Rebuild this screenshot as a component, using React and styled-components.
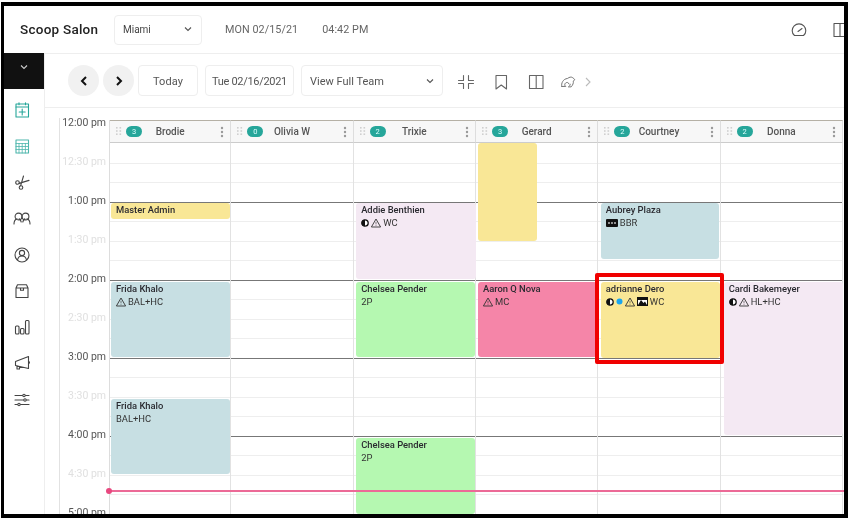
import styled, { createGlobalStyle } from "styled-components";

const GlobalStyle = createGlobalStyle`
  html, body {
    margin: 0;
    background: #fff;
    font-family: Roboto, "Liberation Sans", sans-serif;
  }
`;

const Frame = styled.div`
  box-sizing: border-box;
  width: 847px;
  height: 516px;
  margin: 2px 1px 3px;
  border: solid #000;
  border-width: 4px 4px 4px 3px;
  background: #fff;
  display: flex;
  flex-direction: column;
  overflow: hidden;
  filter: blur(0.35px);
`;

const Header = styled.header`
  flex: none;
  height: 47px;
  display: flex;
  align-items: center;
  padding-left: 16px;
  border-bottom: 1px solid #eee;
`;

const Brand = styled.div`
  width: 94px;
  padding-bottom: 2px;
  font-size: 13.5px;
  font-weight: 500;
  letter-spacing: 0.25px;
  color: #222;
`;

const LocationSelect = styled.div`
  box-sizing: border-box;
  width: 88px;
  height: 30px;
  display: flex;
  align-items: center;
  justify-content: space-between;
  padding: 0 9px 1px 8px;
  border: 1px solid #eee;
  border-radius: 4px;
  font-size: 10px;
  color: #444;
`;

const Clock = styled.span`
  font-size: 10.8px;
  letter-spacing: 0.05px;
  color: #666;
  margin-left: ${(p) => p.$gap}px;
`;

const HeaderIcons = styled.div`
  margin-left: auto;
  display: flex;
  align-items: center;
  gap: 25px;
  margin-right: -4px;
  color: #555;
`;

const Body = styled.div`
  flex: 1;
  min-height: 0;
  display: flex;
`;

const Sidebar = styled.nav`
  flex: none;
  width: 40px;
  border-right: 1px solid #eee;
  margin-top: -1px;
  display: flex;
  flex-direction: column;
  align-items: center;
`;

const SidebarToggle = styled.div`
  align-self: stretch;
  height: 36px;
  background: #111;
  color: #ccc;
  display: flex;
  align-items: center;
  justify-content: center;
  padding-bottom: 8px;
  box-sizing: border-box;
  margin-bottom: 13px;
`;

const SidebarItem = styled.div`
  width: 18px;
  height: 36.2px;
  margin-left: -5px;
  display: flex;
  align-items: flex-start;
  justify-content: center;
  color: ${(p) => p.$color || "#444"};
`;

const Main = styled.main`
  flex: 1;
  min-width: 0;
  display: flex;
  flex-direction: column;
`;

const Toolbar = styled.div`
  flex: none;
  height: 53px;
  display: flex;
  align-items: center;
  padding-left: 23px;
  border-bottom: 1px solid #eee;
`;

const RoundButton = styled.button`
  width: 31px;
  height: 31px;
  border: none;
  border-radius: 50%;
  background: #f1f1f1;
  color: #111;
  padding: 0;
  margin-right: 4px;
  display: flex;
  align-items: center;
  justify-content: center;
`;

const ToolButton = styled.div`
  box-sizing: border-box;
  height: 31px;
  width: ${(p) => p.$width}px;
  margin-right: ${(p) => p.$after}px;
  display: flex;
  align-items: center;
  justify-content: ${(p) => (p.$spread ? "space-between" : "center")};
  padding: 1px ${(p) => (p.$spread ? "8px" : "0")} 0;
  border: 1px solid #eee;
  border-radius: 4px;
  font-size: 11px;
  font-weight: 400;
  letter-spacing: ${(p) => p.$spacing || 0}px;
  color: #555;
`;

const ToolIcons = styled.div`
  display: flex;
  align-items: center;
  margin: 2px 0 0 14px;
  color: #666;
`;

const ToolIcon = styled.span`
  display: flex;
  margin-right: ${(p) => p.$after}px;
`;

const Schedule = styled.section`
  flex: 1;
  min-height: 0;
  display: flex;
  padding-left: 14px;
  padding-top: 10px;
`;

const TimeRail = styled.div`
  flex: none;
  width: 50px;
  border-left: 1px solid #e2e2e2;
  box-sizing: border-box;
`;

const TimeLabel = styled.div`
  height: 39px;
  line-height: 12px;
  padding-right: 3px;
  text-align: right;
  font-size: 10.5px;
  color: ${(p) => (p.$faint ? "#e0e0e0" : "#555")};
  position: relative;
  top: -1px;
`;

const Grid = styled.div`
  position: relative;
  flex: 1;
  margin-top: 2px;
  display: grid;
  grid-template-columns: repeat(6, 122.33px);
`;

const Column = styled.div`
  display: flex;
  flex-direction: column;
  border-left: ${(p) => (p.$first ? "1px solid #ddd" : "none")};
  box-sizing: border-box;
  min-height: 0;
  overflow: hidden;
`;

const ColumnHead = styled.div`
  flex: none;
  box-sizing: border-box;
  height: 23px;
  display: grid;
  grid-template-columns: 1fr auto 1fr;
  align-items: center;
  padding: 0 6px;
  background: #f7f7f7;
  border-top: 1px solid #b5b0a5;
  border-bottom: 1px solid #ccc;
  border-right: 1px solid #ddd;
  font-size: 10px;
  font-weight: 500;
  color: #555;
`;

const HeadLeft = styled.div`
  display: flex;
  align-items: center;
  gap: 4px;
`;

const CountBadge = styled.span`
  width: 16px;
  height: 11px;
  border-radius: 6px;
  background: #26a69a;
  color: #dff;
  font-size: 7.5px;
  font-weight: 400;
  line-height: 11px;
  text-align: center;
`;

const HeadRight = styled.div`
  justify-self: end;
  display: flex;
  color: #999;
`;

const ColumnBody = styled.div`
  position: relative;
  flex: 1;
  padding-top: 1px;
  border-right: 1px solid #e2e2e2;
`;

const Slot = styled.div`
  box-sizing: border-box;
  height: 19.5px;
  border-bottom: 1px solid ${(p) => (p.$hour ? "#777" : "#eee")};
`;

const Appointment = styled.div`
  position: absolute;
  box-sizing: border-box;
  left: ${(p) => p.$left}px;
  width: ${(p) => p.$width}px;
  top: ${(p) => p.$top}px;
  height: ${(p) => p.$height}px;
  padding: 1px 0 0 5px;
  border-radius: 3px;
  background: ${(p) => p.$bg};
  color: #333;
`;

const AppointmentName = styled.div`
  font-size: 9.4px;
  line-height: 12.5px;
  font-weight: 500;
  color: #2a2a30;
  white-space: nowrap;
`;

const AppointmentMeta = styled.div`
  display: flex;
  align-items: center;
  gap: 2px;
  font-size: 9.4px;
  line-height: 12.5px;
  white-space: nowrap;
`;

const NowLine = styled.div`
  position: absolute;
  left: 0;
  right: 0;
  top: 370px;
  height: 2px;
  background: #ec6a97;
`;

const NowDot = styled.div`
  position: absolute;
  left: -3px;
  top: -2px;
  width: 6px;
  height: 6px;
  border-radius: 50%;
  background: #e8487f;
`;

const Highlight = styled.div`
  position: absolute;
  box-sizing: border-box;
  left: 486px;
  top: 153px;
  width: 129px;
  height: 91px;
  border: 4px solid #f00000;
  border-radius: 2px;
`;

const Svg = ({ w = 16, h = 16, vb, sw = 1.1, children }) => (
  <svg
    width={w}
    height={h}
    viewBox={vb || `0 0 ${w} ${h}`}
    fill="none"
    stroke="currentColor"
    strokeWidth={sw}
    strokeLinecap="round"
    strokeLinejoin="round"
  >
    {children}
  </svg>
);

const ChevronDown = ({ color }) => (
  <svg width="8" height="6" viewBox="0 0 8 6" fill="none" stroke={color || "#555"} strokeWidth="1.1">
    <path d="M1 1.5 4 4.5 7 1.5" />
  </svg>
);

const ChevronSide = ({ left }) => (
  <svg width="8" height="10" viewBox="0 0 8 10" fill="none" stroke="currentColor" strokeWidth="2">
    <path d={left ? "M6 1 2 5l4 4" : "M2 1l4 4-4 4"} />
  </svg>
);

const sidebarIcons = [
  {
    color: "#26a69a",
    icon: (
      <Svg>
        <rect x="2" y="2" width="12.5" height="13" />
        <path d="M2 5h12.5M5 .8v2M11.5.8v2M8.2 7v6M5.2 10h6" />
      </Svg>
    ),
  },
  {
    color: "#4db6ac",
    icon: (
      <Svg>
        <rect x="2" y="2" width="12.5" height="13" />
        <path d="M2 5.5h12.5M2 8.5h12.5M2 11.5h12.5M5 5.5V15M8.2 5.5V15M11.4 5.5V15" strokeWidth="0.8" />
      </Svg>
    ),
  },
  {
    icon: (
      <Svg>
        <circle cx="3.5" cy="8.5" r="1.8" />
        <circle cx="7" cy="13.5" r="1.8" />
        <path d="M5 9.4 15 6.4M6.6 11.8 9.5 2" />
      </Svg>
    ),
  },
  {
    icon: (
      <Svg w={18} h={16}>
        <circle cx="5.5" cy="5.5" r="3.4" />
        <circle cx="12.5" cy="5.5" r="3.4" />
        <path d="M1 13c0-3 1.4-4.6 3-5.2M8.2 11c-.4-1.6-1.2-2.6-2-3.2M9.8 11c.4-1.6 1.2-2.6 2-3.2M17 13c0-3-1.4-4.6-3-5.2" />
      </Svg>
    ),
  },
  {
    icon: (
      <Svg>
        <circle cx="8" cy="8" r="7" />
        <circle cx="8" cy="6" r="2.6" />
        <path d="M3.5 12.8c.6-2.6 2.4-3.8 4.5-3.8s3.9 1.2 4.5 3.8" />
      </Svg>
    ),
  },
  {
    icon: (
      <Svg>
        <path d="M2 5 3.5 1.8h9L14 5v9.5H2zM2 5h12M6.5 5v2.2h3V5" />
      </Svg>
    ),
  },
  {
    icon: (
      <Svg>
        <rect x="1.5" y="7" width="3.5" height="8" rx="1" />
        <rect x="6.5" y="9.5" width="3.5" height="5.5" rx="1" />
        <rect x="11.5" y="1.5" width="3.5" height="13.5" rx="1" />
      </Svg>
    ),
  },
  {
    icon: (
      <Svg>
        <path d="M1.5 6.5 14.5 1.5v12L1.5 10.5zM14.5 6l1.3 1.5-1.3 1.5M3 10.8V14h2.5v-2.500" />
      </Svg>
    ),
  },
  {
    icon: (
      <Svg>
        <path d="M1 3.5h14M1 8h14M1 12.5h14" />
        <circle cx="10" cy="3.5" r="1.2" fill="#fff" />
        <circle cx="11" cy="8" r="1.2" fill="#fff" />
        <circle cx="5" cy="12.5" r="1.2" fill="#fff" />
      </Svg>
    ),
  },
];

const DragDots = () => (
  <svg width="6" height="9" viewBox="0 0 6 9" fill="#cfcfcf">
    {[0, 3.2, 6.4].map((y) => (
      <g key={y}>
        <rect x="0" y={y} width="1.6" height="1.6" />
        <rect x="3.5" y={y} width="1.6" height="1.6" />
      </g>
    ))}
  </svg>
);

const Kebab = () => (
  <svg width="4" height="12" viewBox="0 0 4 12" fill="currentColor">
    <circle cx="2" cy="2" r="1.2" />
    <circle cx="2" cy="6" r="1.2" />
    <circle cx="2" cy="10" r="1.2" />
  </svg>
);

const HalfCircle = () => (
  <svg width="8" height="8" viewBox="0 0 8 8">
    <circle cx="4" cy="4" r="3.2" fill="#fff" stroke="#111" strokeWidth="1.3" />
    <path d="M4 .7a3.3 3.3 0 0 0 0 6.6z" fill="#111" />
  </svg>
);

const Warning = () => (
  <svg width="10" height="10" viewBox="0 0 10 10" fill="none" stroke="#333" strokeWidth="0.9">
    <path d="M5 1 9.6 9H.4z" />
    <path d="M5 3.8v2.6M5 7.2v.7" strokeWidth="0.6" />
  </svg>
);

const BlueDot = () => (
  <svg width="7" height="7" viewBox="0 0 7 7">
    <circle cx="3.5" cy="3.5" r="3" fill="#1aa5ee" />
  </svg>
);

const Picture = () => (
  <svg width="11" height="9" viewBox="0 0 11 9">
    <rect x="0.5" y="0.5" width="10" height="8" fill="#fff" stroke="#111" />
    <path d="M1 8 4 3l2.5 3L8 4.5 10 8z" fill="#111" />
    <rect x="1" y="1" width="9" height="2" fill="#111" />
  </svg>
);

const Ticket = () => (
  <svg width="12" height="8" viewBox="0 0 12 8">
    <rect width="12" height="8" rx="1" fill="#111" />
    <path d="M2 4h8" stroke="#bbb" strokeWidth="1.4" strokeDasharray="2 1" />
  </svg>
);

const blue = "#c7dfe3";
const yellow = "#f9e796";
const lilac = "#f4e9f3";
const green = "#b5f8b1";
const pink = "#f585a8";

const staff = [
  {
    name: "Brodie",
    count: 3,
    appointments: [
      { left: 1, width: 118.5, top: 60, height: 16, bg: yellow, title: "Master Admin" },
      { left: 1, width: 118.5, top: 139, height: 75, bg: blue, title: "Frida Khalo", meta: [<Warning key="w" />, "BAL+HC"] },
      { left: 1, width: 118.5, top: 256, height: 75, bg: blue, title: "Frida Khalo", meta: ["BAL+HC"] },
    ],
  },
  { name: "Olivia W", count: 0, appointments: [] },
  {
    name: "Trixie",
    count: 2,
    appointments: [
      { left: 2.5, width: 120, top: 60, height: 76, bg: lilac, title: "Addie Benthien", meta: [<HalfCircle key="h" />, <Warning key="w" />, "WC"] },
      { left: 2.5, width: 118.5, top: 139, height: 75, bg: green, title: "Chelsea Pender", meta: ["2P"] },
      { left: 2.5, width: 118.5, top: 295, height: 76, bg: green, title: "Chelsea Pender", meta: ["2P"] },
    ],
  },
  {
    name: "Gerard",
    count: 3,
    appointments: [
      { left: 2, width: 59, top: 0, height: 98, bg: yellow },
      { left: 2, width: 119, top: 139, height: 75, bg: pink, title: "Aaron Q Nova", meta: [<Warning key="w" />, "MC"] },
    ],
  },
  {
    name: "Courtney",
    count: 2,
    appointments: [
      { left: 2.5, width: 118, top: 60, height: 56, bg: blue, title: "Aubrey Plaza", meta: [<Ticket key="t" />, "BBR"] },
      { left: 2.5, width: 119, top: 139, height: 76, bg: yellow, title: "adrianne Dero", meta: [<HalfCircle key="h" />, <BlueDot key="b" />, <Warning key="w" />, <Picture key="p" />, "WC"] },
    ],
  },
  {
    name: "Donna",
    count: 2,
    appointments: [
      { left: 3, width: 119, top: 139, height: 153, bg: lilac, title: "Cardi Bakemeyer", meta: [<HalfCircle key="h" />, <Warning key="w" />, "HL+HC"] },
    ],
  },
];

const times = ["12:00 pm", "12:30 pm", "1:00 pm", "1:30 pm", "2:00 pm", "2:30 pm", "3:00 pm", "3:30 pm", "4:00 pm", "4:30 pm", "5:00 pm"];

export default function App() {
  return (
    <>
      <GlobalStyle />
      <Frame>
        <Header>
          <Brand>Scoop Salon</Brand>
          <LocationSelect>
            Miami
            <ChevronDown />
          </LocationSelect>
          <Clock $gap={23}>MON 02/15/21</Clock>
          <Clock $gap={24}>04:42 PM</Clock>
          <HeaderIcons>
            <Svg>
              <path d="M3.5 13.5h9c1.5-1.2 2.3-2.8 2.3-4.8A6.8 6.8 0 0 0 1.2 8.7c0 2 .8 3.6 2.3 4.8zM7 9.5 11 6.5" />
            </Svg>
            <Svg>
              <rect x="2" y="1.5" width="12" height="13" />
              <path d="M8 1.5v13" />
            </Svg>
          </HeaderIcons>
        </Header>
        <Body>
          <Sidebar>
            <SidebarToggle>
              <ChevronDown color="#ccc" />
            </SidebarToggle>
            {sidebarIcons.map((item, i) => (
              <SidebarItem key={i} $color={item.color}>
                {item.icon}
              </SidebarItem>
            ))}
          </Sidebar>
          <Main>
            <Toolbar>
              <RoundButton>
                <ChevronSide left />
              </RoundButton>
              <RoundButton>
                <ChevronSide />
              </RoundButton>
              <ToolButton $width={60} $after={7} $spacing={0.1}>Today</ToolButton>
              <ToolButton $width={89} $after={7} $spacing={-0.3}>Tue 02/16/2021</ToolButton>
              <ToolButton $width={142} $after={0} $spread>
                View Full Team
                <ChevronDown />
              </ToolButton>
              <ToolIcons>
                <ToolIcon $after={18}>
                  <Svg w={18} h={18}>
                    <path d="M1.5 7.5h5v-5M16.5 7.5h-5v-5M1.5 10.5h5v5M16.5 10.5h-5v5" />
                  </Svg>
                </ToolIcon>
                <ToolIcon $after={19}>
                  <Svg>
                    <path d="M3 1.5h10.5V15l-5.25-4L3 15z" />
                  </Svg>
                </ToolIcon>
                <ToolIcon $after={16}>
                  <Svg>
                    <rect x="1.5" y="1.5" width="13.5" height="13" />
                    <path d="M8.2 1.5v13" />
                  </Svg>
                </ToolIcon>
                <ToolIcon $after={9}>
                  <Svg w={16} h={14} vb="0 0 18 15" sw={1}>
                    <path d="M2 12.5C1 9 3.5 4 8.5 3.5c2-1.5 4-2 5.5-1 1.2.5 2 1.5 2.5 2.5L15 6.5c.3 2-.5 4.500-2.500 6.500H9.500c1-1 2-1.500 2-3M2 12.500h4.500C5 11.500 5 9.500 6.500 8.500c1.500-1 3-.5 3.500 1" />
                  </Svg>
                </ToolIcon>
                <ToolIcon $after={0}>
                  <svg width="6" height="10" viewBox="0 0 6 10" fill="none" stroke="#bbb" strokeWidth="1.1">
                    <path d="M1 1l4 4-4 4" />
                  </svg>
                </ToolIcon>
              </ToolIcons>
            </Toolbar>
            <Schedule>
              <TimeRail>
                {times.map((t, i) => (
                  <TimeLabel key={t} $faint={i % 2 === 1}>
                    {t}
                  </TimeLabel>
                ))}
              </TimeRail>
              <Grid>
                {staff.map((person, c) => (
                  <Column key={person.name} $first={c === 0}>
                    <ColumnHead>
                      <HeadLeft>
                        <DragDots />
                        <CountBadge>{person.count}</CountBadge>
                      </HeadLeft>
                      <span>{person.name}</span>
                      <HeadRight>
                        <Kebab />
                      </HeadRight>
                    </ColumnHead>
                    <ColumnBody>
                      {Array.from({ length: 20 }, (_, i) => (
                        <Slot key={i} $hour={i % 4 === 2} />
                      ))}
                      {person.appointments.map((a, i) => (
                        <Appointment key={i} $left={a.left} $width={a.width} $top={a.top} $height={a.height} $bg={a.bg}>
                          {a.title && <AppointmentName>{a.title}</AppointmentName>}
                          {a.meta && <AppointmentMeta>{a.meta}</AppointmentMeta>}
                        </Appointment>
                      ))}
                    </ColumnBody>
                  </Column>
                ))}
                <NowLine>
                  <NowDot />
                </NowLine>
                <Highlight />
              </Grid>
            </Schedule>
          </Main>
        </Body>
      </Frame>
    </>
  );
}
